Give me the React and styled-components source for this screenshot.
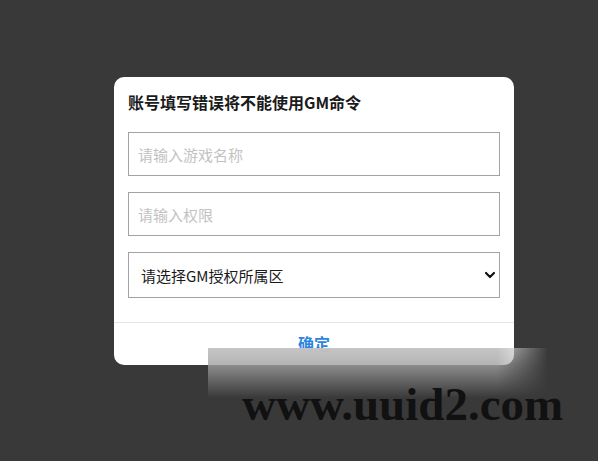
import React from "react";
import styled, { createGlobalStyle } from "styled-components";

const GlobalStyle = createGlobalStyle`
  html, body {
    margin: 0;
    padding: 0;
    background: #393939;
  }
  * {
    box-sizing: border-box;
  }
`;

const Page = styled.div`
  position: relative;
  width: 598px;
  height: 461px;
  overflow: hidden;
  padding: 77px 0 0 114px;
  font-family: "Noto Sans CJK SC", "Noto Sans", sans-serif;
`;

const Dialog = styled.div`
  width: 400px;
  background: #fff;
  border-radius: 10px;
  overflow: hidden;
`;

const Body = styled.div`
  padding: 14px 14px 24px;
  display: flex;
  flex-direction: column;
  gap: 16px;
`;

const Title = styled.div`
  font-size: 16px;
  font-weight: 700;
  line-height: 22px;
  color: #1a1a1a;
  margin-bottom: 3px;
`;

const Field = styled.input`
  display: block;
  width: 100%;
  height: 44px;
  border: 1px solid #a3a3a3;
  border-radius: 0;
  padding: 0 9px;
  font-family: inherit;
  font-size: 15px;
  color: #222;
  outline: none;

  &::placeholder {
    color: #c2c2c2;
  }
`;

const SelectWrap = styled.div`
  position: relative;
`;

const Select = styled.select`
  display: block;
  width: 100%;
  height: 46px;
  border: 1px solid #a3a3a3;
  border-radius: 0;
  background: #fff;
  padding: 0 12px;
  font-family: inherit;
  font-size: 15px;
  color: #1a1a1a;
  appearance: none;
  outline: none;
`;

const Chevron = styled.svg`
  position: absolute;
  right: 4px;
  top: 50%;
  width: 12px;
  height: 12px;
  margin-top: -6px;
  pointer-events: none;
`;

const Footer = styled.div`
  border-top: 1px solid #e6e6e6;
  height: 43px;
  display: flex;
  align-items: center;
  justify-content: center;
`;

const OkButton = styled.button`
  border: none;
  background: none;
  padding: 0;
  font-family: inherit;
  font-size: 16px;
  font-weight: 700;
  color: #2d84de;
  cursor: pointer;
  margin-top: -2px;
`;

const Watermark = styled.div`
  position: absolute;
  left: 208px;
  top: 348px;
  width: 390px;
  height: 113px;
  pointer-events: none;
`;

const Shade = styled.div`
  position: absolute;
  left: 0;
  top: 0;
  width: 340px;
  height: 50px;
  background: linear-gradient(
    180deg,
    rgba(198, 198, 198, 1) 0%,
    rgba(160, 160, 160, 0.8) 35%,
    rgba(57, 57, 57, 0) 100%
  );
  -webkit-mask-image: linear-gradient(90deg, #000 85%, transparent 100%);
  mask-image: linear-gradient(90deg, #000 85%, transparent 100%);
`;

const Mark = styled.div`
  position: absolute;
  left: 34px;
  top: 33px;
  font-family: "Liberation Serif", "Times New Roman", serif;
  font-weight: 700;
  font-size: 47px;
  line-height: 1;
  color: #111;
  white-space: nowrap;
`;

export default function App() {
  return (
    <>
      <GlobalStyle />
      <Page>
        <Dialog>
          <Body>
            <Title>账号填写错误将不能使用GM命令</Title>
            <Field placeholder="请输入游戏名称" />
            <Field placeholder="请输入权限" />
            <SelectWrap>
              <Select defaultValue="">
                <option value="">请选择GM授权所属区</option>
              </Select>
              <Chevron viewBox="0 0 12 12">
                <path
                  d="M2 4 L6 8 L10 4"
                  fill="none"
                  stroke="#111"
                  strokeWidth="2.2"
                  strokeLinecap="round"
                  strokeLinejoin="round"
                />
              </Chevron>
            </SelectWrap>
          </Body>
          <Footer>
            <OkButton>确定</OkButton>
          </Footer>
        </Dialog>
        <Watermark>
          <Shade />
          <Mark>www.uuid2.com</Mark>
        </Watermark>
      </Page>
    </>
  );
}
